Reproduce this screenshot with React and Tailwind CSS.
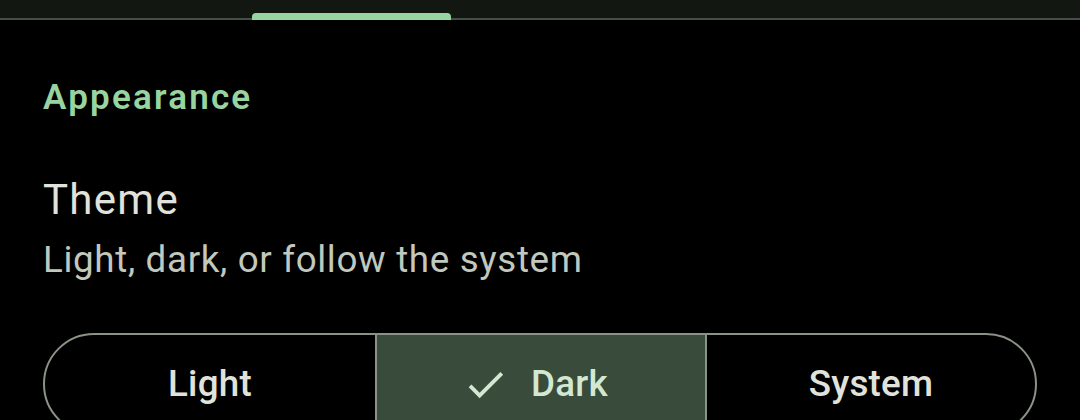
import React from 'react';

const options = ['Light', 'Dark', 'System'];

const CheckIcon = () => (
  <svg viewBox="0 0 24 24" className="w-[47px] h-[47px] fill-current">
    <path d="M9 16.17L4.83 12l-1.42 1.41L9 19 21 7l-1.41-1.41z" />
  </svg>
);

const TabStrip = () => (
  <div className="relative h-[20px] bg-[#121712] border-b-2 border-[#474d47]">
    <div className="absolute left-[252px] bottom-[-2px] w-[199px] h-[7px] rounded-t-[4px] bg-[#98d49f]" />
  </div>
);

const ThemePicker = ({ value }) => (
  <div className="grid grid-cols-3 h-[102px] rounded-full border-2 border-[#8b9287] overflow-hidden">
    {options.map((opt, i) => {
      const active = opt === value;
      return (
        <div
          key={opt}
          className={
            'flex items-center justify-center text-[36.75px] leading-[44px] font-medium tracking-[0.26px] ' +
            (i > 0 ? 'border-l-2 border-[#8b9287] ' : '') +
            (active ? 'bg-[#394b3b] text-[#d2e8d1]' : 'text-[#e0e3dc]')
          }
        >
          <div className={'flex items-center gap-[22px] ' + (active ? 'mr-[12px]' : '')}>
            {active && <CheckIcon />}
            <span>{opt}</span>
          </div>
        </div>
      );
    })}
  </div>
);

export default function App() {
  return (
    <div className="w-[1080px] h-[420px] bg-black overflow-hidden" style={{ fontFamily: 'Roboto, "Noto Sans", sans-serif' }}>
      <TabStrip />
      <div className="px-[43px]">
        <h2 className="mt-[56px] text-[35px] leading-[44px] font-semibold tracking-[2.2px] text-[#98d49f]">Appearance</h2>
        <div className="mt-[55px]">
          <p className="text-[42px] leading-[50px] tracking-[1.3px] text-[#e0e3dc]">Theme</p>
          <p className="mt-[13px] text-[36.75px] leading-[44px] tracking-[0.66px] text-[#c1c8bd]">Light, dark, or follow the system</p>
        </div>
        <div className="mt-[51px]">
          <ThemePicker value="Dark" />
        </div>
      </div>
    </div>
  );
}
